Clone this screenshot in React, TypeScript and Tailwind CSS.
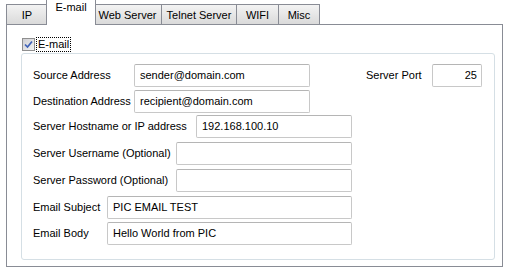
const font = { fontFamily: '"Liberation Sans", Arial, sans-serif' };

type Tab = { label: string; w: string; active?: boolean };

const tabs: Tab[] = [
  { label: "IP", w: "w-[42px]" },
  { label: "E-mail", w: "w-[46px]", active: true },
  { label: "Web Server", w: "w-[68px]" },
  { label: "Telnet Server", w: "w-[75px]" },
  { label: "WIFI", w: "w-[42px]" },
  { label: "Misc", w: "w-[41px]" },
];

function Field({
  label,
  labelW,
  inputW,
  value,
  mt,
}: {
  label: string;
  labelW: string;
  inputW: string;
  value?: string;
  mt: string;
}) {
  return (
    <div className={`flex items-center ${mt}`}>
      <div className={`${labelW} shrink-0 whitespace-nowrap text-[11px] leading-none text-black`}>{label}</div>
      <div
        className={`${inputW} h-[23px] shrink-0 whitespace-nowrap rounded-[2px] border border-[#c8c8c8] border-t-[#b5b5b5] bg-white px-[5px] text-[11px] leading-[21px] text-black`}
      >
        {value}
      </div>
    </div>
  );
}

export default function App() {
  return (
    <div className="w-[510px] h-[274px] bg-white pl-[6px] pt-[2px]" style={font}>
      {/* tab strip */}
      <div className="flex h-[22px] items-end">
        {tabs.map((t) =>
          t.active ? (
            <div
              key={t.label}
              className={`${t.w} relative z-10 -mx-[2px] -mb-px h-[23px] box-content border border-b-0 border-[#898c95] bg-white px-[1px] pt-[4px] text-center text-[11px] leading-none text-black`}
            >
              {t.label}
            </div>
          ) : (
            <div
              key={t.label}
              className={`${t.w} h-[20px] whitespace-nowrap border border-b-0 border-l-0 first:border-l border-[#898c95] bg-gradient-to-b from-[#f3f3f3] to-[#dadada] pt-[5px] text-center text-[11px] leading-none text-black`}
            >
              {t.label}
            </div>
          )
        )}
      </div>

      {/* panel */}
      <div className="w-[497px] h-[243px] border border-[#898c95] bg-white pl-[15px] pr-[7px] pt-[12px]">
        <div className="flex items-center">
          <div className="flex h-[13px] w-[13px] items-center justify-center border border-[#8f8f8f] bg-gradient-to-br from-[#cfcfd3] to-[#f2f2f2]">
            <svg width="9" height="9" viewBox="0 0 9 9">
              <path d="M1 4.5 L3.5 7 L8 1.5" fill="none" stroke="#3f62b8" strokeWidth="1.7" />
            </svg>
          </div>
          <div className="ml-[1px] border border-dotted border-black px-[1px] text-[11px] leading-[13px] text-black">
            E-mail
          </div>
        </div>

        <div className="mt-[1px] -ml-[1px] h-[207px] rounded-[3px] border border-[#d5dfe5] pl-[11px] pt-[10px]">
          <div className="flex items-center">
            <Field label="Source Address" labelW="w-[101px]" inputW="w-[176px]" value="sender@domain.com" mt="mt-0" />
            <div className="ml-[56px] w-[66px] whitespace-nowrap text-[11px] leading-none text-black">Server Port</div>
            <div className="h-[23px] w-[50px] rounded-[2px] border border-[#c8c8c8] border-t-[#b5b5b5] px-[4px] text-right text-[11px] leading-[21px] text-black">
              25
            </div>
          </div>
          <Field label="Destination Address" labelW="w-[101px]" inputW="w-[176px]" value="recipient@domain.com" mt="mt-[3px]" />
          <Field label="Server Hostname or IP address" labelW="w-[163px]" inputW="w-[156px]" value="192.168.100.10" mt="mt-[2px]" />
          <Field label="Server Username (Optional)" labelW="w-[143px]" inputW="w-[176px]" mt="mt-[4px]" />
          <Field label="Server Password (Optional)" labelW="w-[143px]" inputW="w-[176px]" mt="mt-[4px]" />
          <Field label="Email Subject" labelW="w-[74px]" inputW="w-[245px]" value="PIC EMAIL TEST" mt="mt-[4px]" />
          <Field label="Email Body" labelW="w-[74px]" inputW="w-[245px]" value="Hello World from PIC" mt="mt-[3px]" />
        </div>
      </div>
    </div>
  );
}
